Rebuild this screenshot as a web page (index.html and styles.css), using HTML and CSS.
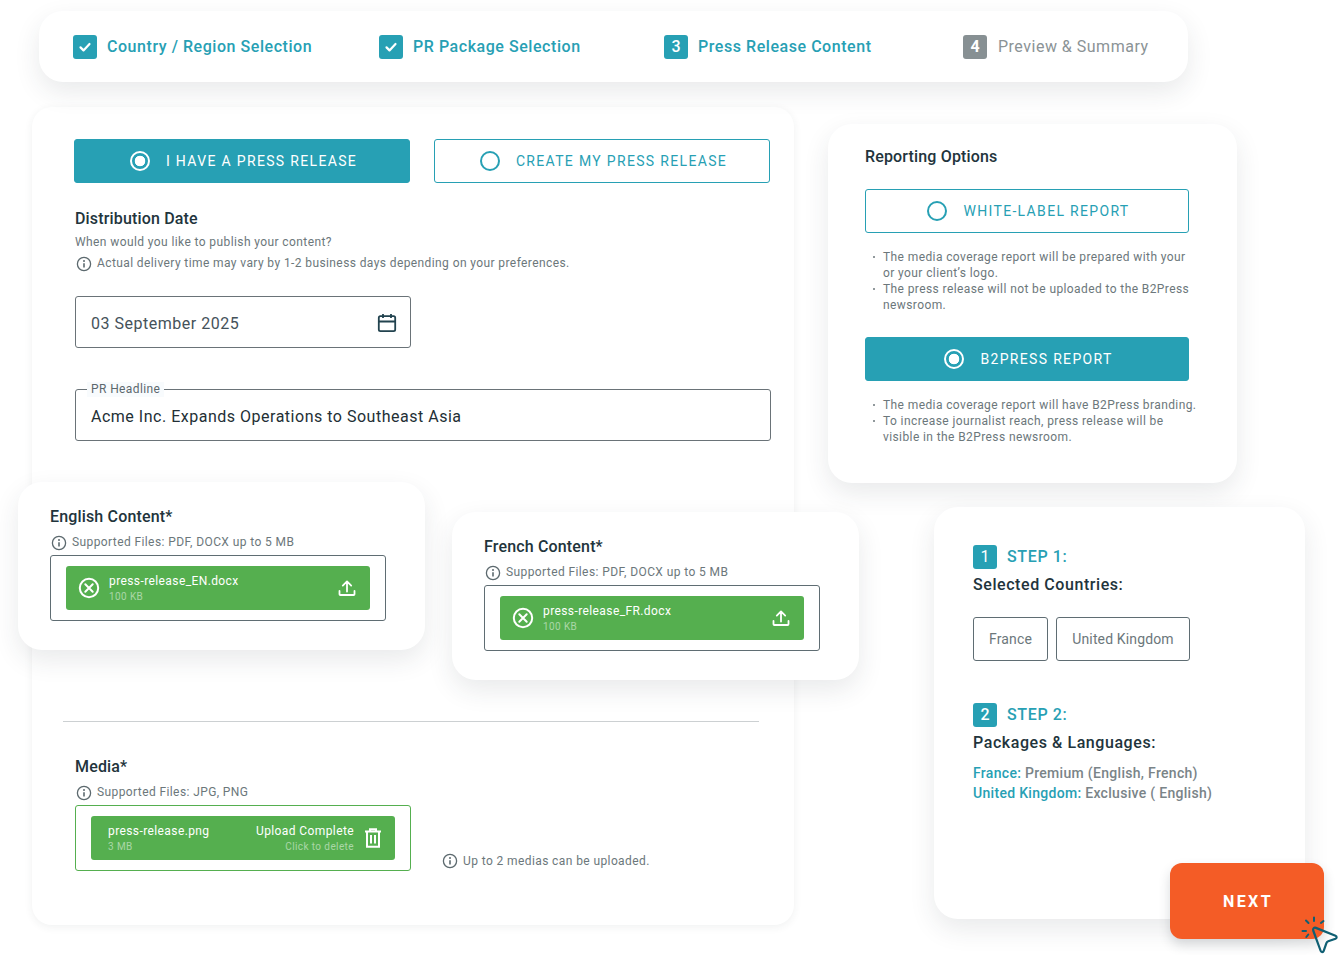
FILE: index.html
```html
<!DOCTYPE html>
<html lang="en">
<head>
<meta charset="utf-8">
<title>Press Release Content</title>
<link rel="stylesheet" href="styles.css">
</head>
<body>
<svg class="defs" width="0" height="0" aria-hidden="true">
  <symbol id="info" viewBox="0 0 16 16"><circle cx="8" cy="8" r="6.6" fill="none" stroke="currentColor" stroke-width="1.3"/><circle cx="8" cy="5" r="1" fill="currentColor"/><path d="M8 7.200v4.300" stroke="currentColor" stroke-width="1.600" fill="none"/></symbol>
  <symbol id="check" viewBox="0 0 24 24"><path d="M7.500 12.400l3 3 6-6.400" fill="none" stroke="#fff" stroke-width="2.200" stroke-linecap="round" stroke-linejoin="round"/></symbol>
  <symbol id="xcircle" viewBox="0 0 22 22"><circle cx="11" cy="11" r="9.200" fill="none" stroke="#fff" stroke-width="2"/><path d="M7.300 7.300l7.400 7.400M14.700 7.300l-7.400 7.400" fill="none" stroke="#fff" stroke-width="2" stroke-linecap="round"/></symbol>
  <symbol id="upload" viewBox="0 0 18 18"><path d="M1.500 12v3.200c0 .5.300.8.800.8h13.400c.5 0 .8-.3.800-.8V12M9 12.500V2.600M4.800 6.600L9 2.400l4.200 4.200" fill="none" stroke="#fff" stroke-width="1.800" stroke-linecap="round" stroke-linejoin="round"/></symbol>
</svg>

<main class="canvas">
  <nav class="card stepper">
    <div class="step step-one"><span class="tile"><svg class="tile-check"><use href="#check"/></svg></span><span class="step-label">Country / Region Selection</span></div>
    <div class="step step-two"><span class="tile"><svg class="tile-check"><use href="#check"/></svg></span><span class="step-label">PR Package Selection</span></div>
    <div class="step step-three"><span class="tile">3</span><span class="step-label">Press Release Content</span></div>
    <div class="step step-off"><span class="tile">4</span><span class="step-label">Preview &amp; Summary</span></div>
  </nav>

  <section class="card main-card">
    <div class="choice-row">
      <div class="choice choice-on"><span class="radio"></span>I HAVE A PRESS RELEASE</div>
      <div class="choice"><span class="radio"></span>CREATE MY PRESS RELEASE</div>
    </div>

    <h2 class="title date-title">Distribution Date</h2>
    <p class="help help-plain">When would you like to publish your content?</p>
    <p class="help"><svg class="info"><use href="#info"/></svg>Actual delivery time may vary by 1-2 business days depending on your preferences.</p>

    <div class="field date-field">
      <span>03 September 2025</span>
      <svg class="calendar" viewBox="0 0 20 20"><rect x="1.800" y="3.200" width="16.400" height="15" rx="1.600" fill="none" stroke="#22434f" stroke-width="1.800"/><path d="M1.800 8.500h16.400M6 1v4M14 1v4" fill="none" stroke="#22434f" stroke-width="1.800"/></svg>
    </div>

    <div class="field headline-field">
      <span class="legend">PR Headline</span>
      <span>Acme Inc. Expands Operations to Southeast Asia</span>
    </div>

    <hr class="rule">

    <h2 class="title media-title">Media*</h2>
    <p class="help media-help"><svg class="info"><use href="#info"/></svg>Supported Files: JPG, PNG</p>
    <div class="media-row">
      <div class="drop drop-ok">
        <div class="file file-media">
          <div class="file-text"><span class="file-name">press-release.png</span><span class="file-size">3 MB</span></div>
          <div class="file-text file-status"><span class="file-name">Upload Complete</span><span class="file-size">Click to delete</span></div>
          <svg class="trash" viewBox="0 0 18 20"><path d="M1 3.500h16M6 3.500V1.200h6v2.300M3 3.500v15.300h12V3.500M7 7v8.500M11 7v8.500" fill="none" stroke="#fff" stroke-width="2"/></svg>
        </div>
      </div>
      <p class="help media-note"><svg class="info"><use href="#info"/></svg>Up to 2 medias can be uploaded.</p>
    </div>
  </section>

  <section class="card upload-card english">
    <h2 class="title">English Content*</h2>
    <p class="help upload-help"><svg class="info"><use href="#info"/></svg>Supported Files: PDF, DOCX up to 5 MB</p>
    <div class="drop">
      <div class="file">
        <svg class="xcircle"><use href="#xcircle"/></svg>
        <div class="file-text"><span class="file-name">press-release_EN.docx</span><span class="file-size">100 KB</span></div>
        <svg class="upload"><use href="#upload"/></svg>
      </div>
    </div>
  </section>

  <section class="card upload-card french">
    <h2 class="title">French Content*</h2>
    <p class="help upload-help"><svg class="info"><use href="#info"/></svg>Supported Files: PDF, DOCX up to 5 MB</p>
    <div class="drop">
      <div class="file">
        <svg class="xcircle"><use href="#xcircle"/></svg>
        <div class="file-text"><span class="file-name">press-release_FR.docx</span><span class="file-size">100 KB</span></div>
        <svg class="upload"><use href="#upload"/></svg>
      </div>
    </div>
  </section>

  <aside class="card report-card">
    <h2 class="title report-title">Reporting Options</h2>
    <div class="choice choice-wide"><span class="radio"></span>WHITE-LABEL REPORT</div>
    <ul class="notes">
      <li>The media coverage report will be prepared with your or your client’s logo.</li>
      <li>The press release will not be uploaded to the B2Press newsroom.</li>
    </ul>
    <div class="choice choice-wide choice-on report-second"><span class="radio"></span>B2PRESS REPORT</div>
    <ul class="notes notes-last">
      <li>The media coverage report will have B2Press branding.</li>
      <li>To increase journalist reach, press release will be visible in the B2Press newsroom.</li>
    </ul>
  </aside>

  <aside class="card summary-card">
    <div class="sum-head"><span class="tile tile-thin">1</span><span>STEP 1:</span></div>
    <h3 class="sum-title">Selected Countries:</h3>
    <div class="chips"><span class="chip chip-fr">France</span><span class="chip chip-uk">United Kingdom</span></div>
    <div class="sum-head sum-head-two"><span class="tile">2</span><span>STEP 2:</span></div>
    <h3 class="sum-title">Packages &amp; Languages:</h3>
    <p class="sum-line sum-line-first"><b>France:</b> Premium (English, French)</p>
    <p class="sum-line"><b>United Kingdom:</b> Exclusive ( English)</p>
  </aside>

  <button class="next" type="button">NEXT</button>
  <svg class="cursor" viewBox="0 0 40 40" aria-hidden="true">
    <path d="M13.200 15.500c-.6-1.900.9-3.300 2.700-2.600l19.600 7.800c1.500.6 1.500 2.500 0 3.100l-7.300 2.500c-.9.300-1.500.9-1.800 1.800l-2.700 7.800c-.5 1.500-2.500 1.500-3 .1z" fill="none" stroke="#0f5f73" stroke-width="2.200" stroke-linejoin="round"/>
    <path d="M14 2.500v3.500M6 5.500l2.500 2.500M23.500 6l-2.600 2M2.500 16H6M8.300 19.500l-2 2.500" fill="none" stroke="#0f5f73" stroke-width="2" stroke-linecap="round"/>
  </svg>
</main>
</body>
</html>
```
FILE: styles.css
```css
* { box-sizing: border-box; }
html, body { margin: 0; padding: 0; background: #fff; }
body { font-family: Roboto, "Liberation Sans", sans-serif; color: #22343c; }
.defs { position: absolute; }
h2, h3, p, ul { margin: 0; padding: 0; }

.canvas { position: relative; width: 1340px; height: 955px; overflow: hidden; }

.card {
  position: absolute;
  background: #fff;
  border-radius: 24px;
  box-shadow: 0 10px 26px rgba(40, 50, 60, .1);
}

/* Stepper */
.stepper {
  left: 39px; top: 11px; width: 1149px; height: 71px;
  padding-left: 34px;
  display: grid;
  grid-template-columns: 306px 285px 299px auto;
  align-items: center;
  z-index: 2;
}
.step { display: flex; align-items: center; gap: 10px; color: #27a0b4; font-size: 16px; font-weight: 500; letter-spacing: .55px; }
.step-off { gap: 11px; color: #8b9396; font-weight: 400; letter-spacing: .5px; }
.tile {
  width: 24px; height: 24px; flex: none;
  display: flex; align-items: center; justify-content: center;
  background: #27a0b4; color: #fff; border-radius: 3px;
  font-size: 16px; font-weight: 500; letter-spacing: 0;
}
.tile-thin { font-weight: 400; }
.step-off .tile { background: #879093; font-weight: 700; }
.tile-check { width: 24px; height: 24px; display: block; }

/* Main card */
.main-card {
  left: 32px; top: 107px; width: 762px; height: 818px;
  padding: 32px 0 0 42px;
  border-radius: 20px;
  box-shadow: 0 2px 8px rgba(40, 50, 60, .07);
}
.choice-row { display: flex; gap: 24px; }
.choice {
  width: 336px; height: 44px; flex: none;
  display: flex; align-items: center; justify-content: center; gap: 16px;
  padding-left: 3px;
  border: 1px solid #27a0b4; border-radius: 3px;
  color: #27a0b4; font-size: 14px; font-weight: 400; letter-spacing: 1.33px;
}
.choice-on { background: #27a0b4; color: #fff; }
.radio {
  width: 20px; height: 20px; flex: none;
  border: 2px solid #27a0b4; border-radius: 50%;
}
.choice-on .radio { border-color: #fff; background: radial-gradient(circle, #fff 0 5px, transparent 5.6px); }

.title { font-size: 16px; line-height: 20px; font-weight: 500; letter-spacing: .16px; color: #22343c; }
.date-title { margin: 26px 0 0 1px; }

.help {
  display: flex; align-items: center; gap: 5px;
  font-size: 12px; line-height: 21px; letter-spacing: .4px; color: #6c777b;
  white-space: nowrap;
}
.help-plain { margin: 3px 0 0 1px; }
.help:not(.help-plain) { margin-left: 2px; }
.info { width: 16px; height: 16px; flex: none; color: #5c696e; }

.field {
  position: relative;
  display: flex; align-items: center; justify-content: space-between;
  height: 52px; margin-left: 1px; padding: 2px 13px 0 15px;
  border: 1px solid #6a7378; border-radius: 3px;
  font-size: 16px; letter-spacing: .51px; color: #2d3a40;
}
.date-field { width: 336px; margin-top: 22px; color: #45525a; }
.calendar { width: 20px; height: 20px; }
.headline-field { width: 696px; margin-top: 41px; color: #232f35; }
.legend {
  position: absolute; left: 11px; top: -8px;
  padding: 0 4px; background: #f8fbfd;
  font-size: 12px; line-height: 15px; letter-spacing: .4px; color: #5c686d;
}

.rule { width: 696px; height: 1px; margin: 280px 0 0 -11px; border: 0; background: #ccd0d2; }
.media-title { margin: 35px 0 0 1px; }
.help.media-help { margin-top: 5px; }
.media-row { display: flex; align-items: flex-end; gap: 31px; margin: 2px 0 0 1px; }
.drop { width: 336px; height: 66px; padding: 10px 15px; border: 1px solid #5f6d73; border-radius: 3px; }
.drop-ok { border-color: #55af4f; }
.help.media-note { margin: 0; line-height: 20px; }

.file {
  height: 44px; display: flex; align-items: center;
  background: #55af4f; border-radius: 3px; color: #fff;
  padding: 0 14px 0 12px;
}
.file-media { padding: 0 13px 0 17px; }
.file-text { display: flex; flex-direction: column; letter-spacing: .4px; white-space: nowrap; }
.file-name { font-size: 12px; line-height: 16px; }
.file-size { font-size: 10px; line-height: 14px; margin-top: 1px; color: rgba(255, 255, 255, .5); }
.file-status { margin-left: auto; align-items: flex-end; }
.xcircle { width: 22px; height: 22px; flex: none; margin-right: 9px; }
.upload { width: 18px; height: 18px; margin-left: auto; }
.trash { width: 18px; height: 20px; margin-left: 10px; flex: none; }

/* Floating upload cards */
.upload-card { width: 407px; height: 168px; padding: 25px 0 0 32px; z-index: 3; }
.english { left: 18px; top: 482px; }
.french { left: 452px; top: 512px; }
.help.upload-help { margin: 5px 0 0 1px; }
.upload-card .drop { margin-top: 2px; }

/* Reporting card */
.report-card { left: 828px; top: 124px; width: 409px; height: 359px; padding: 23px 0 0 37px; }
.report-title { margin-bottom: 22px; }
.choice-wide { width: 324px; }
.report-second { margin-top: 24px; }
.notes {
  list-style: none; width: 315px; margin: 16px 0 0 18px;
  font-size: 12px; line-height: 16px; letter-spacing: .4px; color: #6c777b;
}
.notes li { position: relative; }
.notes li::before {
  content: ""; position: absolute; left: -10px; top: 7px;
  width: 2px; height: 2px; border-radius: 50%; background: #6c777b;
}

/* Summary card */
.summary-card { left: 934px; top: 507px; width: 371px; height: 412px; padding: 38px 0 0 39px; }
.sum-head { display: flex; align-items: center; gap: 10px; color: #27a0b4; font-size: 16px; line-height: 22px; font-weight: 500; letter-spacing: .64px; }
.sum-head-two { margin-top: 42px; }
.sum-title { margin-top: 6px; font-size: 16px; line-height: 20px; font-weight: 500; letter-spacing: .57px; color: #22343c; }
.chips { display: flex; gap: 8px; margin-top: 22px; }
.chip {
  height: 44px; display: flex; align-items: center; justify-content: center;
  border: 1px solid #5f6d73; border-radius: 3px;
  font-size: 14px; letter-spacing: .14px; color: #6c777b;
}
.chip-fr { width: 75px; }
.chip-uk { width: 134px; }
.sum-line { font-size: 14px; line-height: 20px; font-weight: 500; letter-spacing: .3px; color: #7a8488; }
.sum-line b { font-weight: 500; color: #27a0b4; }
.sum-line-first { margin-top: 10px; }

/* Next button and cursor */
.next {
  position: absolute; left: 1170px; top: 863px; width: 154px; height: 76px;
  padding: 0 0 0 2px;
  border: 0; border-radius: 12px; background: #f45c26;
  box-shadow: 0 6px 12px rgba(40, 50, 60, .18);
  color: #fff; font: 700 16px Roboto, "Liberation Sans", sans-serif; letter-spacing: 2.4px;
  z-index: 4;
}
.cursor { position: absolute; left: 1300px; top: 915px; width: 40px; height: 40px; z-index: 5; }
```
